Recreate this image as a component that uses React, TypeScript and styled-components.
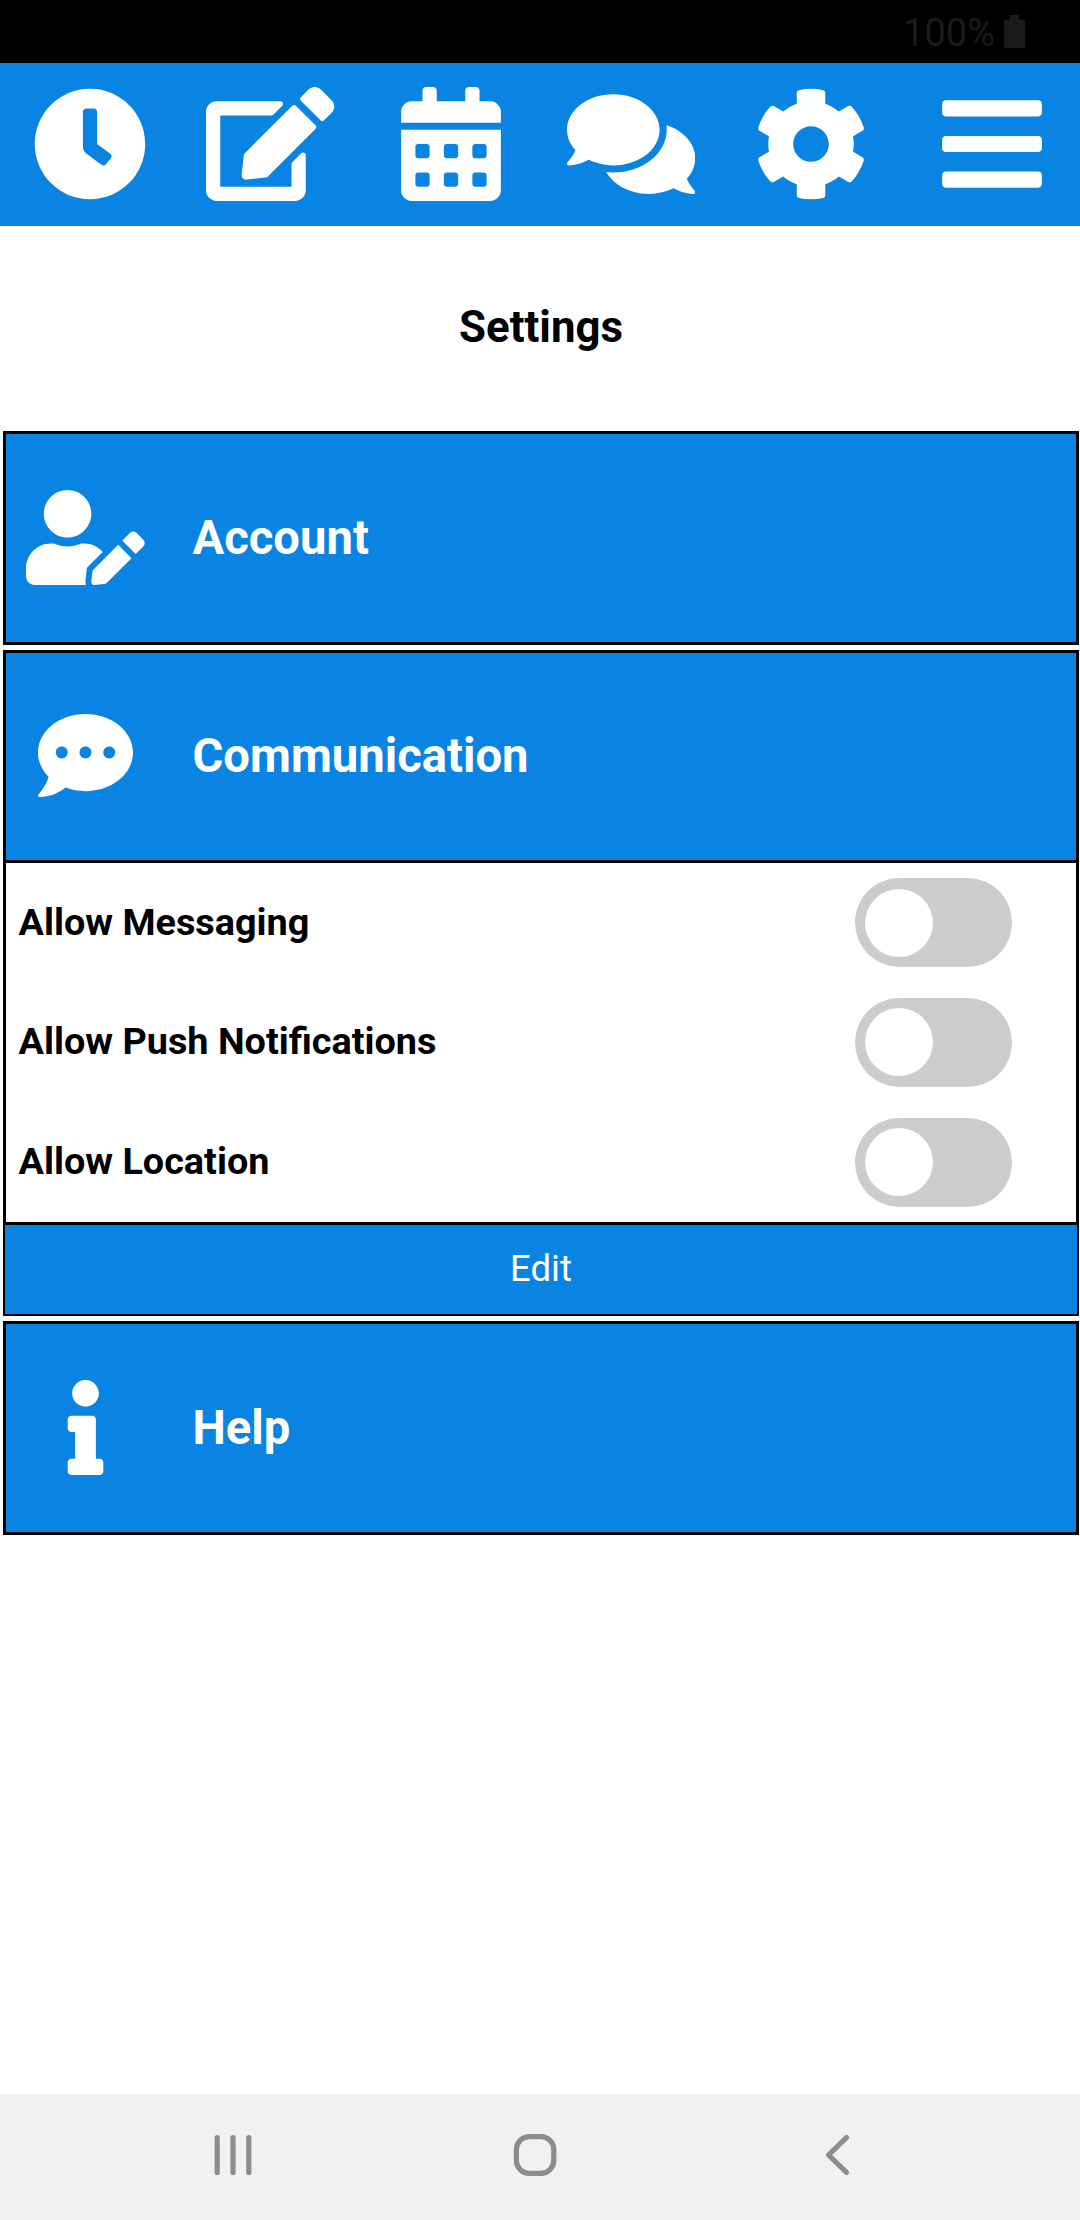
import React from "react";
import styled, { createGlobalStyle } from "styled-components";
import type { IconType } from "react-icons";
import {
  FaBars,
  FaCalendarAlt,
  FaClock,
  FaCog,
  FaCommentDots,
  FaComments,
  FaEdit,
  FaInfo,
  FaUserEdit,
} from "react-icons/fa";

const BLUE = "#0984e3";

const GlobalStyle = createGlobalStyle`
  *, *::before, *::after { box-sizing: border-box; }
  body { margin: 0; background: #fff; overflow: hidden; }
`;

const Screen = styled.div`
  display: flex;
  flex-direction: column;
  width: 1080px;
  height: 2220px;
  overflow: hidden;
  background: #fff;
  color: #000;
  font-family: Roboto, "Liberation Sans", sans-serif;
`;

const StatusBar = styled.div`
  display: flex;
  flex: none;
  justify-content: flex-end;
  align-items: center;
  gap: 9px;
  height: 63px;
  padding-right: 55px;
  background: #000;
  color: #1a1a1a;
`;

const BatteryLevel = styled.span`
  font-size: 38px;
  line-height: 44px;
  padding-top: 2px;
`;

const BatteryIcon = styled.svg`
  display: block;
  width: 21px;
  height: 33px;
  fill: currentColor;
`;

const TopNav = styled.nav`
  display: grid;
  flex: none;
  grid-template-columns: repeat(6, 180.3px);
  height: 163px;
  background: ${BLUE};
`;

/* Icons wider than they are tall need their width in em to keep full height. */
const NavButton = styled.button<{ $iconWidth?: number }>`
  display: flex;
  align-items: center;
  justify-content: center;
  padding: 0 0 2px;
  border: 0;
  background: none;
  color: #fff;
  font-size: 114px;

  svg {
    display: block;
    flex: none;
    width: ${({ $iconWidth }) => $iconWidth ?? 1}em;
    height: 1em;
  }
`;

const Title = styled.h1`
  flex: none;
  height: 205px;
  margin: 0;
  padding-left: 2px;
  font-size: 43.8px;
  font-weight: 700;
  line-height: 203px;
  text-align: center;
`;

const Sections = styled.main`
  display: flex;
  flex: 1;
  flex-direction: column;
  gap: 5px;
  padding: 0 1px 0 3px;
`;

const SectionHeader = styled.button<{ $open: boolean }>`
  display: flex;
  align-items: center;
  width: 100%;
  height: ${({ $open }) => ($open ? 213 : 214)}px;
  padding: 0 0 ${({ $open }) => ($open ? 2 : 1)}px;
  border: 3px solid #000;
  background: ${BLUE};
  color: #fff;
  font: 700 47.2px/56px Roboto, "Liberation Sans", sans-serif;
  text-align: left;
`;

const SectionIcon = styled.span<{ $iconWidth?: number }>`
  display: flex;
  flex: none;
  justify-content: center;
  width: 159px;
  margin-right: 27.5px;
  font-size: 95px;

  svg {
    display: block;
    flex: none;
    width: ${({ $iconWidth }) => $iconWidth ?? 1}em;
    height: 1em;
  }
`;

const SectionLabel = styled.span`
  padding-top: 1px;
`;

const Panel = styled.div`
  padding: 0 64px 0 12.5px;
  border: solid #000;
  border-width: 0 3px 3px;
  background: #fff;
`;

const OptionRow = styled.label`
  display: flex;
  align-items: center;
  justify-content: space-between;
  height: 119.67px;
  font-size: 37.8px;
  font-weight: 700;
`;

const OptionLabel = styled.span`
  padding-bottom: 2px;
`;

const Toggle = styled.span`
  display: flex;
  align-items: center;
  width: 157px;
  height: 89px;
  padding-left: 10px;
  border-radius: 45px;
  background: #ccc;
`;

const Knob = styled.span`
  width: 68px;
  height: 68px;
  border-radius: 50%;
  background: #fff;
`;

const EditButton = styled.button`
  display: block;
  width: 100%;
  height: 91px;
  padding: 0;
  border: solid #000;
  border-width: 0 2px 2px;
  background: ${BLUE};
  color: #fff;
  font: 400 36.5px/44px Roboto, "Liberation Sans", sans-serif;
`;

const SystemNav = styled.footer`
  display: flex;
  flex: none;
  align-items: center;
  justify-content: space-between;
  height: 126px;
  padding: 0 220px 4px 210px;
  background: #f1f1f1;
`;

const SystemIcon = styled.svg`
  display: block;
  width: 46px;
  height: 46px;
  fill: none;
  stroke: #8c8c8c;
  stroke-width: 5.2;
  stroke-linecap: round;
  stroke-linejoin: round;
`;

const NAV_ITEMS: { name: string; Icon: IconType; iconWidth?: number }[] = [
  { name: "clock", Icon: FaClock },
  { name: "edit", Icon: FaEdit, iconWidth: 1.125 },
  { name: "calendar", Icon: FaCalendarAlt },
  { name: "chat", Icon: FaComments, iconWidth: 1.125 },
  { name: "settings", Icon: FaCog },
  { name: "menu", Icon: FaBars },
];

const OPTIONS = ["Allow Messaging", "Allow Push Notifications", "Allow Location"];

function Section({
  Icon,
  iconWidth,
  label,
  children,
}: {
  Icon: IconType;
  iconWidth?: number;
  label: string;
  children?: React.ReactNode;
}) {
  return (
    <section>
      <SectionHeader $open={Boolean(children)}>
        <SectionIcon $iconWidth={iconWidth}>
          <Icon />
        </SectionIcon>
        <SectionLabel>{label}</SectionLabel>
      </SectionHeader>
      {children}
    </section>
  );
}

export default function App() {
  return (
    <Screen>
      <GlobalStyle />
      <StatusBar>
        <BatteryLevel>100%</BatteryLevel>
        <BatteryIcon viewBox="0 0 21 33">
          <path d="M6 0h9v4.5h5q1 0 1 1V32q0 1-1 1H1q-1 0-1-1V5.5q0-1 1-1h5z" />
        </BatteryIcon>
      </StatusBar>
      <TopNav>
        {NAV_ITEMS.map(({ name, Icon, iconWidth }) => (
          <NavButton key={name} $iconWidth={iconWidth}>
            <Icon />
          </NavButton>
        ))}
      </TopNav>
      <Title>Settings</Title>
      <Sections>
        <Section Icon={FaUserEdit} iconWidth={1.25} label="Account" />
        <Section Icon={FaCommentDots} label="Communication">
          <Panel>
            {OPTIONS.map((option) => (
              <OptionRow key={option}>
                <OptionLabel>{option}</OptionLabel>
                <Toggle>
                  <Knob />
                </Toggle>
              </OptionRow>
            ))}
          </Panel>
          <EditButton>Edit</EditButton>
        </Section>
        <Section Icon={FaInfo} label="Help" />
      </Sections>
      <SystemNav>
        <SystemIcon viewBox="0 0 46 46">
          <path d="M7.2 5.6v34.800M23 5.6v34.800M38.8 5.6v34.800" />
        </SystemIcon>
        <SystemIcon viewBox="0 0 46 46">
          <rect x="4.4" y="4.6" width="37.4" height="36.8" rx="13" />
        </SystemIcon>
        <SystemIcon viewBox="0 0 46 46">
          <path d="M32.5 5.6 14.5 23l18 17.4" />
        </SystemIcon>
      </SystemNav>
    </Screen>
  );
}
